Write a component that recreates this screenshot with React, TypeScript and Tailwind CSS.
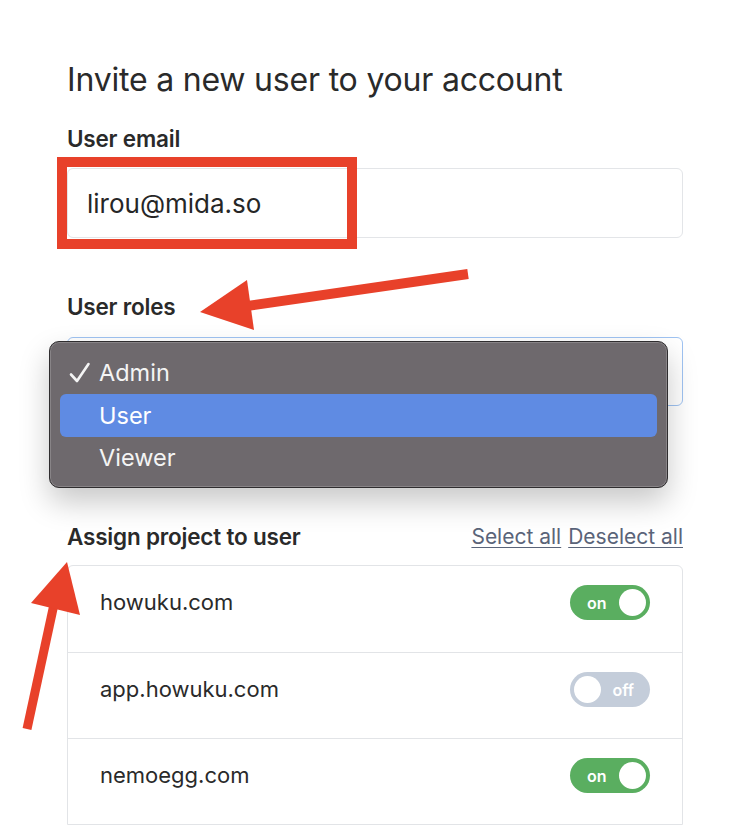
import React from "react";

const font = { fontFamily: "Inter, 'Noto Sans', sans-serif" };

function Toggle({ on }: { on: boolean }) {
  return on ? (
    <div className="flex h-[35px] w-[80px] items-center justify-between rounded-full bg-[#5aae60] pl-[17px] pr-[4px]">
      <span className="text-[16px] font-semibold leading-none text-white">on</span>
      <span className="h-[27px] w-[27px] rounded-full bg-white" />
    </div>
  ) : (
    <div className="flex h-[35px] w-[80px] items-center justify-between rounded-full bg-[#c4cdda] pl-[4px] pr-[16px]">
      <span className="h-[27px] w-[27px] rounded-full bg-white" />
      <span className="text-[16px] font-semibold leading-none text-white">off</span>
    </div>
  );
}

export default function App() {
  const projects = [
    { name: "howuku.com", on: true },
    { name: "app.howuku.com", on: false },
    { name: "nemoegg.com", on: true },
  ];
  return (
    <div className="relative h-[826px] w-[750px] overflow-hidden bg-white text-[#2a2a2a]" style={font}>
      <div className="flex flex-col px-[67px] pt-[62px]">
        <h1 className="text-[32px] font-normal leading-[36px] tracking-[-0.2px] text-[#2a2a2a]">Invite a new user to your account</h1>
        <label className="mt-[27px] text-[22.5px] font-semibold leading-[28px] tracking-[-0.2px]">User email</label>
        <div className="relative mt-[15px]">
          <div className="flex h-[70px] w-[616px] items-center rounded-[6px] border border-[#e3e5e8] bg-white pl-[19px] text-[26px] text-[#262626]">
            lirou@mida.so
          </div>
          <div className="absolute left-[-10px] top-[-11px] h-[92px] w-[300px] border-[10px] border-[#e8412a]" />
        </div>
        <label className="mt-[55px] text-[22.5px] font-semibold leading-[28px] tracking-[-0.2px]">User roles</label>
        <div className="relative mt-[16px]">
          <div className="h-[69px] w-[616px] rounded-[6px] border border-[#9fc3f2] bg-white" />
          <div className="absolute left-[-18px] top-[4px] flex h-[147px] w-[619px] flex-col rounded-[10px] border border-[#2f2d2f] bg-[#6e696d] px-[10px] pt-[10px] text-[23.5px] leading-[30px] text-[#f4f4f4] shadow-[0_14px_30px_rgba(0,0,0,0.22),inset_0_0_0_1px_rgba(255,255,255,0.18)]">
            <div className="flex h-[42px] items-center">
              <span className="flex w-[39px] items-center pl-[9px]">
                <svg width="22" height="22" viewBox="0 0 22 22">
                  <path d="M2 12.5 L8 19 L19.5 2" fill="none" stroke="#f4f4f4" strokeWidth="2.6" strokeLinecap="round" strokeLinejoin="round" />
                </svg>
              </span>
              <span>Admin</span>
            </div>
            <div className="flex h-[43px] items-center rounded-[6px] bg-[#5f8be3] pl-[39px] text-white">User</div>
            <div className="flex h-[42px] items-center pl-[39px]">Viewer</div>
          </div>
        </div>
        <div className="mt-[117px] flex items-center justify-between">
          <span className="text-[22.5px] font-semibold leading-[28px] tracking-[-0.2px]">Assign project to user</span>
          <div className="flex gap-[7px] text-[21px] leading-[28px] text-[#5a6479]">
            <span className="underline decoration-[1px] underline-offset-[3px]">Select all</span>
            <span className="underline decoration-[1px] underline-offset-[3px]">Deselect all</span>
          </div>
        </div>
        <div className="mt-[14px] w-[616px] rounded-t-[6px] border border-[#e2e4e7]">
          {projects.map((p, i) => (
            <div
              key={p.name}
              className={`flex h-[86px] items-start justify-between pl-[32px] pr-[32px] pt-[19px] ${i > 0 ? "border-t border-[#e2e4e7]" : ""}`}
            >
              <span className="text-[22px] leading-[35px] text-[#2a2a2a]">{p.name}</span>
              <Toggle on={p.on} />
            </div>
          ))}
        </div>
      </div>
      <svg className="pointer-events-none absolute left-0 top-0" width="750" height="826" viewBox="0 0 750 826">
        <line x1="468" y1="274" x2="240" y2="307" stroke="#e8412a" strokeWidth="10" />
        <polygon points="200,312 247,280 254,330" fill="#e8412a" />
        <line x1="27" y1="729" x2="56" y2="595" stroke="#e8412a" strokeWidth="9" />
        <polygon points="67,562 31,603 80,615" fill="#e8412a" />
      </svg>
    </div>
  );
}
